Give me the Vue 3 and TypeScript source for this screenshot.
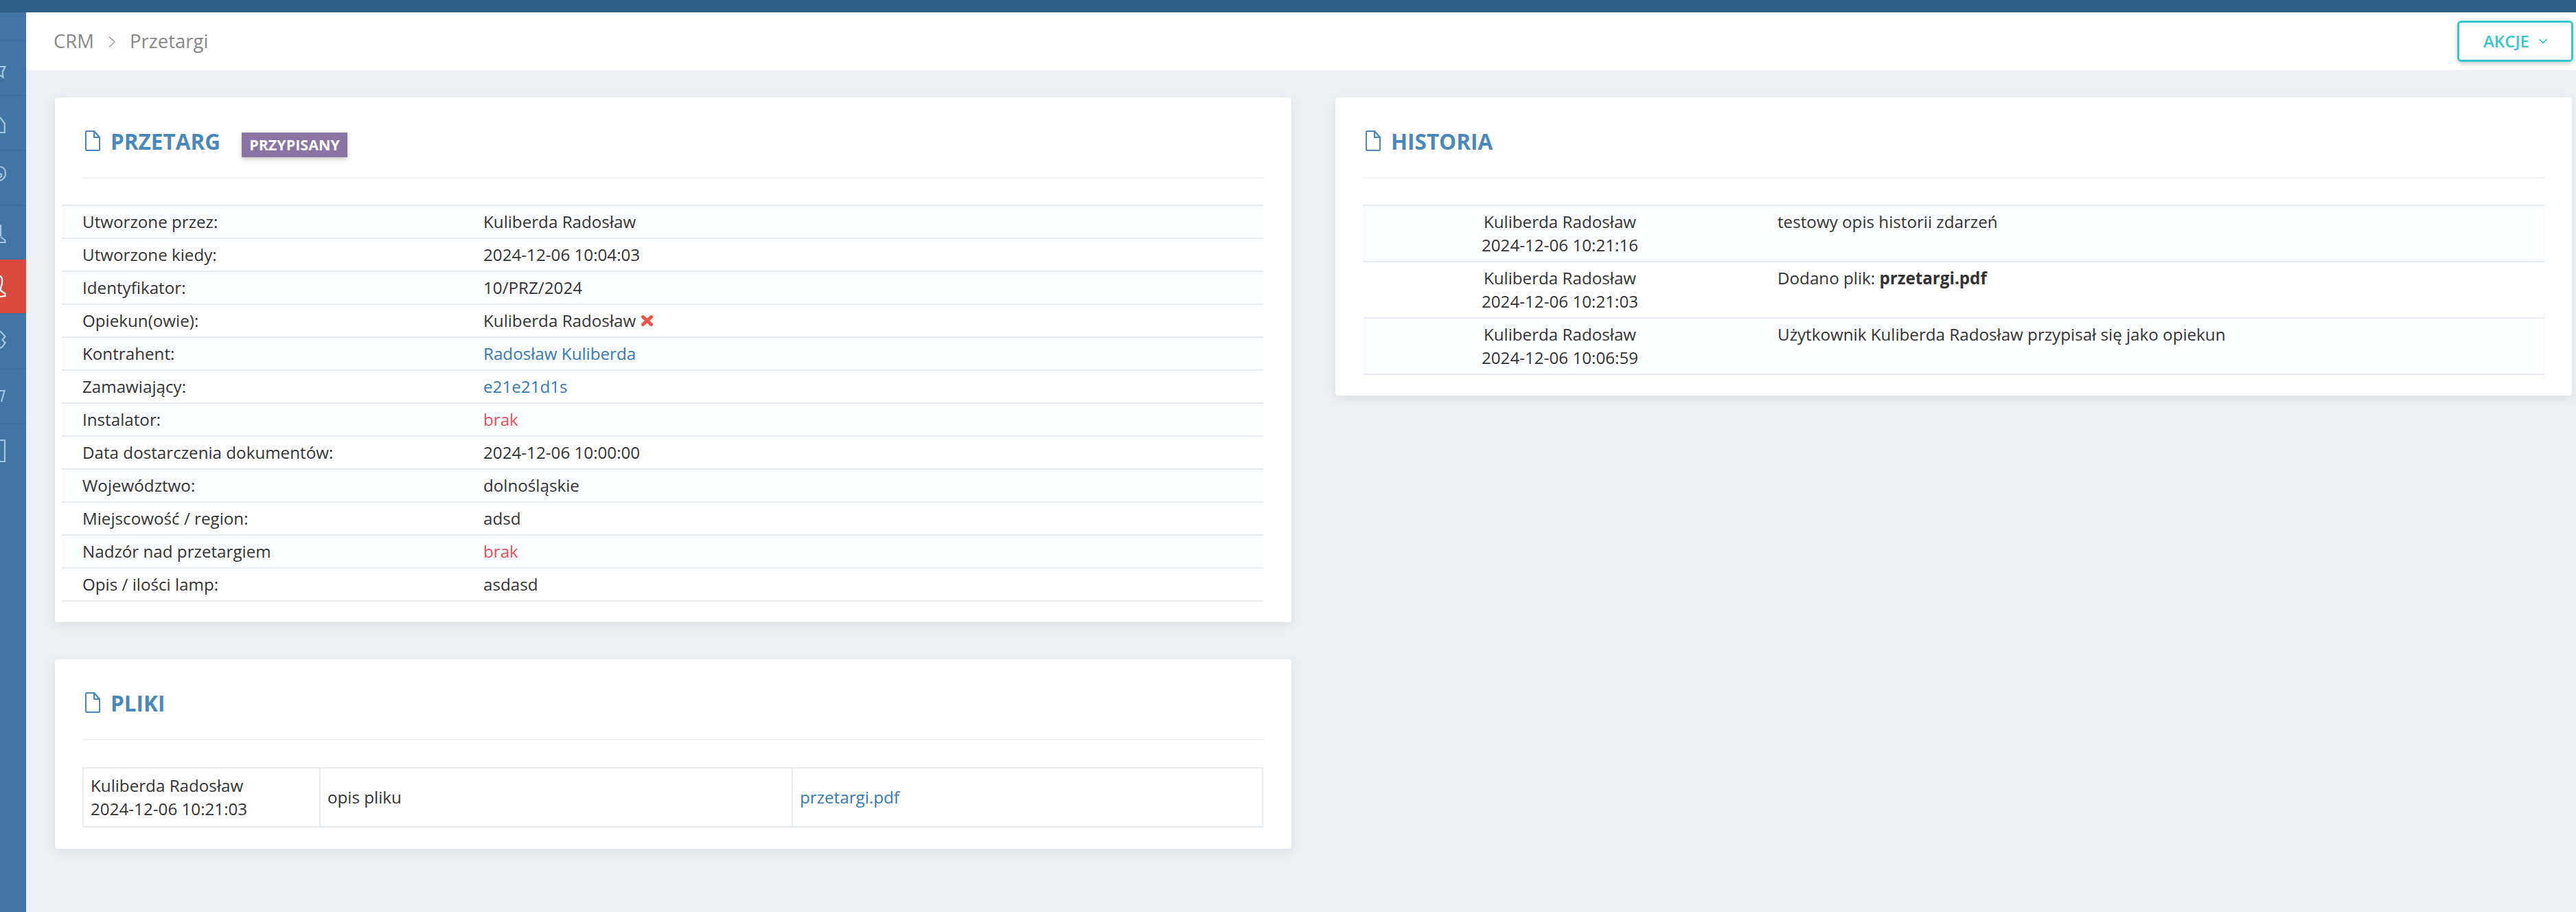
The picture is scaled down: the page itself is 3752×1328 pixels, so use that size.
<script setup lang="ts">
interface InfoRow { label: string; value: string; kind?: 'link' | 'none' | 'owner' }
const rows: InfoRow[] = [
  { label: 'Utworzone przez:', value: 'Kuliberda Radosław' },
  { label: 'Utworzone kiedy:', value: '2024-12-06 10:04:03' },
  { label: 'Identyfikator:', value: '10/PRZ/2024' },
  { label: 'Opiekun(owie):', value: 'Kuliberda Radosław', kind: 'owner' },
  { label: 'Kontrahent:', value: 'Radosław Kuliberda', kind: 'link' },
  { label: 'Zamawiający:', value: 'e21e21d1s', kind: 'link' },
  { label: 'Instalator:', value: 'brak', kind: 'none' },
  { label: 'Data dostarczenia dokumentów:', value: '2024-12-06 10:00:00' },
  { label: 'Województwo:', value: 'dolnośląskie' },
  { label: 'Miejscowość / region:', value: 'adsd' },
  { label: 'Nadzór nad przetargiem', value: 'brak', kind: 'none' },
  { label: 'Opis / ilości lamp:', value: 'asdasd' },
]
const history = [
  { who: 'Kuliberda Radosław', when: '2024-12-06 10:21:16', text: 'testowy opis historii zdarzeń', file: '' },
  { who: 'Kuliberda Radosław', when: '2024-12-06 10:21:03', text: 'Dodano plik: ', file: 'przetargi.pdf' },
  { who: 'Kuliberda Radosław', when: '2024-12-06 10:06:59', text: 'Użytkownik Kuliberda Radosław przypisał się jako opiekun', file: '' },
]
const nav = [
  { d: '', cls: 'first' },
  { d: 'M0 37H7.5L3.6 44.5L4.6 52.5L0 49.5', cls: '' },
  { d: 'M0 31L7.5 40.5M6.8 40V53H0', cls: '' },
  { d: 'M0 23C5 23 8 27 8 33C8 38 4 42 0 43M0 33C3 33 3 38 0 38', cls: '' },
  { d: 'M1 27V44M1 45L7.5 50V53H0', cls: 'flat' },
  { d: 'M0 24C4 25 4 34 1 42L1 45L7.5 49.5V53L0 54', cls: 'active' },
  { d: 'M0 24L7.5 32L3.5 37L7.5 41L3.5 47L0 49', cls: '' },
  { d: 'M0 31H6.5L2 47', cls: '' },
  { d: 'M0 23H7V54H0', cls: 'last' },
]
</script>

<template>
  <div class="page">
    <div class="topbar"></div>
    <div class="body">
      <aside class="sidebar">
        <div v-for="(item, i) in nav" :key="i" class="nav-item" :class="item.cls">
          <svg v-if="item.d" width="38" height="78" viewBox="0 0 38 78"><path :d="item.d" /></svg>
        </div>
      </aside>
      <main class="main">
        <header class="crumbs">
          <div class="trail">
            <span>CRM</span>
            <svg class="sep" width="10" height="18" viewBox="0 0 10 18"><path d="M1 1.5L9 9L1 16.5" /></svg>
            <span>Przetargi</span>
          </div>
          <button class="action" type="button">
            AKCJE
            <svg width="12" height="8" viewBox="0 0 12 8"><path d="M0.5 1L6 6.5L11.5 1" /></svg>
          </button>
        </header>
        <div class="columns">
          <div class="col">
            <section class="card info">
              <div class="head">
                <svg class="file" width="22" height="30" viewBox="0 0 22 30"><path d="M1 2a1 1 0 0 1 1-1h11l8 9v18a1 1 0 0 1-1 1H2a1 1 0 0 1-1-1z" /><path class="fold" d="M13 1v9h8z" /></svg>
                <h2>PRZETARG</h2>
                <span class="badge">PRZYPISANY</span>
              </div>
              <div class="rows">
                <div v-for="r in rows" :key="r.label" class="row">
                  <div>{{ r.label }}</div>
                  <div v-if="r.kind === 'owner'" class="owner">
                    {{ r.value }}
                    <svg width="17" height="16" viewBox="0 0 17 16"><path d="M2.5 2.5L14.5 13.5M14.5 2.5L2.5 13.5" /></svg>
                  </div>
                  <div v-else :class="r.kind">{{ r.value }}</div>
                </div>
              </div>
            </section>
            <section class="card files">
              <div class="head">
                <svg class="file" width="22" height="30" viewBox="0 0 22 30"><path d="M1 2a1 1 0 0 1 1-1h11l8 9v18a1 1 0 0 1-1 1H2a1 1 0 0 1-1-1z" /><path class="fold" d="M13 1v9h8z" /></svg>
                <h2>PLIKI</h2>
              </div>
              <div class="file-row">
                <div>Kuliberda Radosław<br />2024-12-06 10:21:03</div>
                <div class="mid">opis pliku</div>
                <div class="mid link">przetargi.pdf</div>
              </div>
            </section>
          </div>
          <div class="col">
            <section class="card hist">
              <div class="head">
                <svg class="file" width="22" height="30" viewBox="0 0 22 30"><path d="M1 2a1 1 0 0 1 1-1h11l8 9v18a1 1 0 0 1-1 1H2a1 1 0 0 1-1-1z" /><path class="fold" d="M13 1v9h8z" /></svg>
                <h2>HISTORIA</h2>
              </div>
              <div class="rows">
                <div v-for="h in history" :key="h.when" class="hrow">
                  <div class="who">{{ h.who }}<br />{{ h.when }}</div>
                  <div class="what">{{ h.text }}<b v-if="h.file">{{ h.file }}</b></div>
                </div>
              </div>
            </section>
          </div>
        </div>
      </main>
    </div>
  </div>
</template>

<style>
html, body { margin: 0; background: #edf0f5; overflow: hidden; }
</style>

<style scoped>
.page { height: 1328px; display: flex; flex-direction: column; background: #edf0f5; font-family: "Open Sans", sans-serif; font-size: 24.2px; line-height: 34px; color: #333; }
.topbar { height: 18px; background: #2f5f88; flex: none; }
.body { flex: 1; display: flex; min-height: 0; }
.sidebar { width: 38px; flex: none; background: #4175a4; overflow: hidden; }
.nav-item { height: 78px; border-bottom: 2px solid #3c70a2; overflow: hidden; }
.nav-item.first { height: 40px; }
.nav-item.flat, .nav-item.last { border-bottom: 0; }
.nav-item.active { background: #d9493c; }
.nav-item svg { display: block; }
.nav-item path { fill: none; stroke: #a5c5df; stroke-width: 2.2; }
.nav-item.active path { stroke: #fff; }
.main { flex: 1; min-width: 0; }
.crumbs { height: 84px; background: #fff; display: flex; align-items: center; justify-content: space-between; padding: 0 4px 0 40px; box-sizing: border-box; }
.trail { display: flex; align-items: center; font-size: 27.5px; color: #888; }
.sep { margin: 2px 21px 0; }
.sep path { fill: none; stroke: #999; stroke-width: 1.5; }
.action { width: 169px; height: 60px; box-sizing: border-box; border: 3px solid #36c6d3; border-radius: 6px; background: #fff; color: #36c6d3; font: 600 24px "Open Sans", sans-serif; display: flex; align-items: center; justify-content: center; gap: 14px; padding: 0 0 2px; box-shadow: 0 3px 6px rgba(0, 0, 0, .2); }
.action svg { margin-top: 2px; }
.action path { fill: none; stroke: #36c6d3; stroke-width: 1.6; }
.columns { display: grid; grid-template-columns: 1801px 1801px; column-gap: 64px; padding: 40px 6px 0 42px; }
.col { display: flex; flex-direction: column; gap: 54px; }
.card { background: #fff; border-radius: 4px; padding: 0 40px 30px; box-shadow: 0 4px 14px rgba(60, 80, 110, .1); }
.files { padding-bottom: 31px; }
.head { height: 118px; padding: 48px 4px 0; box-sizing: border-box; border-bottom: 2px solid #eef1f5; margin-bottom: 38px; display: flex; align-items: flex-start; }
.files .head { margin-bottom: 39px; }
.file { flex: none; }
.file path { fill: #fff; stroke: #4a88bb; stroke-width: 2; stroke-linejoin: round; }
.file .fold { fill: #e3edf5; }
h2 { margin: -4px 0 0 15px; font-size: 31.5px; line-height: 40px; font-weight: 700; color: #4a88bb; }
.badge { margin: 3px 0 0 31px; width: 154px; height: 36px; box-sizing: border-box; background: #8a74a4; color: #fff; font-size: 21.5px; font-weight: 700; line-height: 36px; text-align: center; box-shadow: 0 3px 6px rgba(0, 0, 0, .2); }
.rows { border-top: 2px solid #e7ecf1; }
.info .rows { margin-left: -30px; width: 1750px; }
.hist .rows { width: 1722px; }
.row { display: grid; grid-template-columns: 584px 1fr; padding: 6px 0 6px 30px; border-bottom: 2px solid #e7ecf1; }
.row:nth-child(odd), .hrow:nth-child(odd) { background: #fbfcfe; }
.owner { display: flex; align-items: center; gap: 8px; }
.link { color: #337ab7; }
.none { color: #e7505a; }
.owner path { fill: none; stroke: #f3533f; stroke-width: 5; stroke-linecap: round; }
.hrow { display: grid; grid-template-columns: 574px 1fr; padding: 6px 0; border-bottom: 2px solid #e7ecf1; }
.who { text-align: center; }
.what { padding-left: 30px; }
.what b { font-weight: 700; }
.file-row { display: grid; grid-template-columns: 343px 688px 1fr; border: 2px solid #e7ecf1; width: 1720px; box-sizing: border-box; }
.file-row > div { padding: 8px 10px; }
.file-row > div + div { border-left: 2px solid #e7ecf1; }
.mid { display: flex; align-items: center; }
</style>
